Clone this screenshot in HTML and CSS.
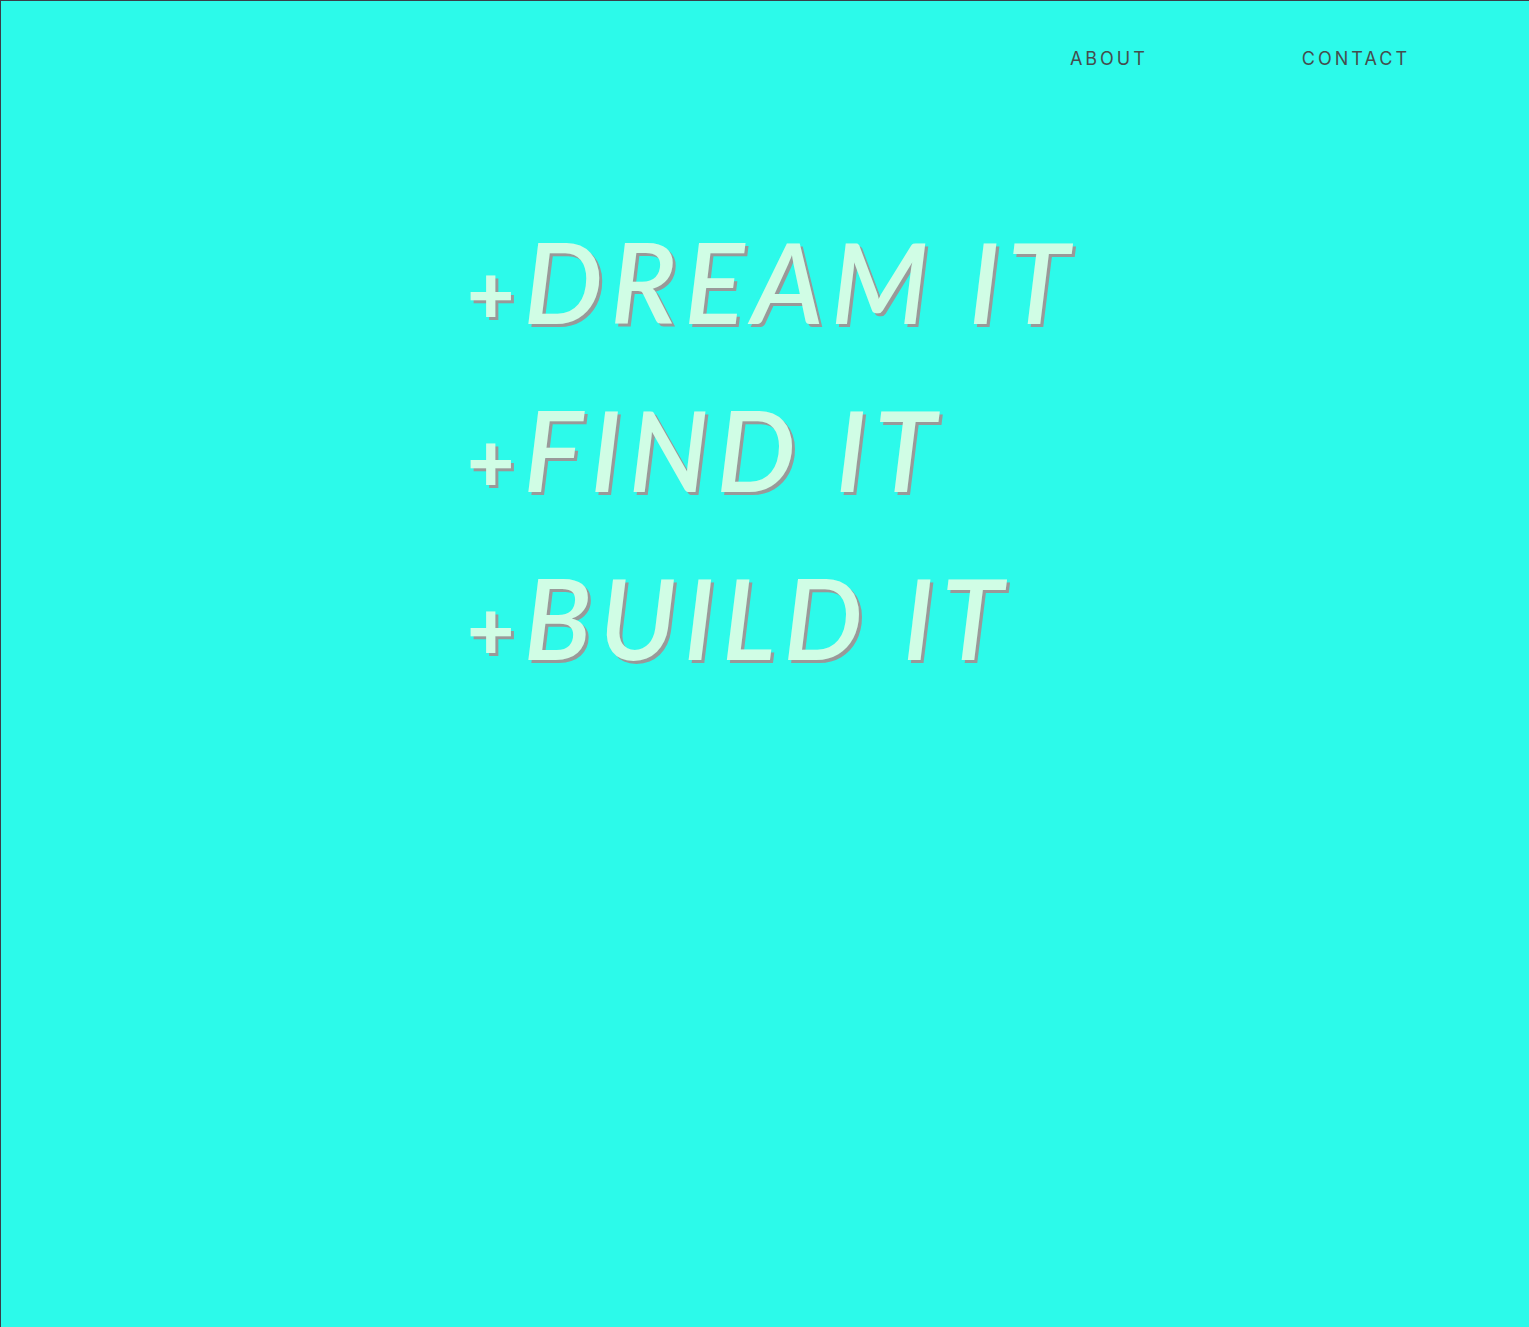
FILE: index.html
```html
<!DOCTYPE html>
<html lang="en">
<head>
<meta charset="utf-8">
<title>Dream it, Find it, Build it</title>
<link rel="stylesheet" href="styles.css">
</head>
<body>
<div class="page">
  <header class="nav">
    <a class="nav-link" href="#about">ABOUT</a>
    <a class="nav-link" href="#contact">CONTACT</a>
  </header>
  <main class="hero">
    <h1 class="line"><span class="plus">+</span>DREAM IT</h1>
    <h1 class="line"><span class="plus">+</span>FIND IT</h1>
    <h1 class="line"><span class="plus">+</span>BUILD IT</h1>
  </main>
</div>
</body>
</html>
```

FILE: styles.css
```css
html, body {
  margin: 0;
  padding: 0;
  height: 100%;
}
body {
  background: #2cfaea;
}
.page {
  box-sizing: border-box;
  min-height: 100vh;
  border-top: 1px solid #3a3f4a;
  border-left: 1px solid #3a3f4a;
  background: #2cfaea;
}
.nav {
  display: flex;
  justify-content: flex-end;
  gap: 154px;
  padding: 47px 119px 0 0;
}
.nav-link {
  font-family: "Inter", "Liberation Sans", sans-serif;
  font-size: 18px;
  letter-spacing: 3px;
  color: #454d4d;
  text-decoration: none;
  line-height: 22px;
}
.hero {
  padding: 127px 0 0 466px;
}
.line {
  margin: 0;
  font-family: "Lato", "Open Sans", sans-serif;
  font-style: italic;
  font-weight: 600;
  font-size: 112px;
  line-height: 168px;
  letter-spacing: 7.5px;
  color: #d0fde5;
  text-shadow: 3px 3px 0 #999999;
  white-space: nowrap;
}
.plus {
  font-size: 82px;
  line-height: 0;
  font-weight: 900;
  font-style: normal;
  letter-spacing: 9px;
}
```
